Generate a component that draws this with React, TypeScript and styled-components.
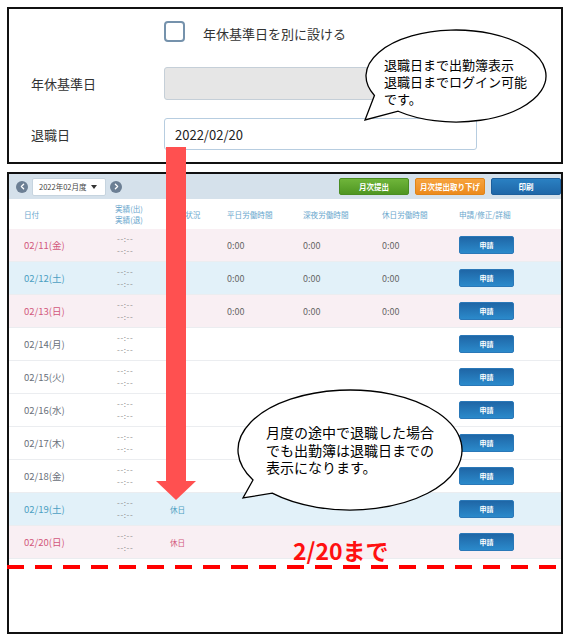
import React from "react";
import styled, { createGlobalStyle } from "styled-components";
import { ChevronLeft, ChevronRight } from "lucide-react";

const GlobalStyle = createGlobalStyle`
  html, body { margin: 0; padding: 0; background: #fff; }
  body { font-family: "Noto Sans CJK JP", "Noto Sans", sans-serif; }
  * { box-sizing: border-box; }
`;

const Page = styled.div`
  position: relative;
  width: 572px;
  height: 643px;
  padding: 7px 0 0 7px;
  overflow: hidden;
`;

/* ---------- employee settings form ---------- */

const FormPanel = styled.section`
  width: 556px;
  height: 157px;
  border: 2px solid #111;
  padding: 11px 0 0 22px;
  display: flex;
  flex-direction: column;
`;

const CheckRow = styled.label`
  display: flex;
  align-items: center;
  gap: 18px;
  height: 22px;
  margin-left: 133px;
  font-size: 13px;
  color: #333;
`;

const CheckBox = styled.span`
  width: 21px;
  height: 21px;
  border: 2px solid #7592ac;
  border-radius: 4px;
  background: #fff;
`;

const CheckText = styled.span`
  padding-top: 4px;
`;

const FieldRow = styled.div<{ $top: number; $h: number }>`
  display: grid;
  grid-template-columns: 133px 313px;
  align-items: center;
  margin-top: ${(p) => p.$top}px;
  height: ${(p) => p.$h}px;
`;

const FieldLabel = styled.span`
  font-size: 13px;
  color: #333;
`;

const TextBox = styled.div<{ $disabled?: boolean }>`
  height: 100%;
  display: flex;
  align-items: center;
  padding-left: 10px;
  border: 1px solid ${(p) => (p.$disabled ? "#c5cfd8" : "#b7cde0")};
  border-radius: 3px;
  background: ${(p) => (p.$disabled ? "#e6e6e6" : "#fff")};
  font-size: 13px;
  color: #222;
`;

/* ---------- attendance table ---------- */

const TablePanel = styled.section`
  margin-top: 8px;
  width: 556px;
  height: 462px;
  border: 2px solid #111;
  display: flex;
  flex-direction: column;
`;

const Toolbar = styled.div`
  height: 25px;
  flex: none;
  display: flex;
  align-items: center;
  padding: 0 0 0 7px;
  background: #d5e1eb;
`;

const NavButton = styled.span`
  width: 12px;
  height: 12px;
  border-radius: 50%;
  background: #6c7f94;
  display: flex;
  align-items: center;
  justify-content: center;
  color: #fff;
`;

const MonthSelect = styled.div`
  width: 74px;
  height: 18px;
  margin: 0 4px;
  display: flex;
  align-items: center;
  justify-content: space-between;
  padding: 0 8px 0 6px;
  background: #fff;
  border: 1px solid #c6d4df;
  border-radius: 2px;
  font-size: 7.5px;
  color: #444;
`;

const Caret = styled.span`
  width: 0;
  height: 0;
  border-left: 3px solid transparent;
  border-right: 3px solid transparent;
  border-top: 4px solid #333;
`;

const ToolbarActions = styled.div`
  margin-left: auto;
  display: flex;
  gap: 6px;
`;

const toolColors: Record<string, [string, string, string]> = {
  green: ["#6fb53a", "#4f9622", "#4a8d22"],
  orange: ["#f6a33e", "#ec8a1c", "#e08418"],
  blue: ["#2a80c2", "#1f67a8", "#1d5f9c"],
};

const ToolButton = styled.span<{ $tone: "green" | "orange" | "blue" }>`
  width: 70px;
  height: 17px;
  display: flex;
  align-items: center;
  justify-content: center;
  border-radius: 2px;
  border: 1px solid ${(p) => toolColors[p.$tone][2]};
  background: linear-gradient(
    ${(p) => toolColors[p.$tone][0]},
    ${(p) => toolColors[p.$tone][1]}
  );
  font-size: 7.5px;
  font-weight: 700;
  color: #fff;
`;

const gridCols = "91px 55px 57px 76px 79px 77px 1fr";

const HeadRow = styled.div`
  height: 30px;
  flex: none;
  display: grid;
  grid-template-columns: ${gridCols};
  align-items: center;
  padding-left: 15px;
  background: #fff;
  font-size: 7.6px;
  color: #6aa7cd;
`;

const HeadStack = styled.span`
  display: flex;
  flex-direction: column;
  line-height: 11px;
`;

type Kind = "holiday" | "sat" | "weekday";

const rowBg: Record<Kind, string> = {
  holiday: "#f9eff3",
  sat: "#e2f1f9",
  weekday: "#fff",
};

const dayColor: Record<Kind, string> = {
  holiday: "#d2587c",
  sat: "#4c9fc2",
  weekday: "#69707a",
};

const DayRow = styled.div<{ $kind: Kind }>`
  height: 33px;
  flex: none;
  display: grid;
  grid-template-columns: ${gridCols};
  align-items: center;
  padding-left: 15px;
  background: ${(p) => rowBg[p.$kind]};
  border-bottom: 1px solid #ebedf0;
  font-size: 9px;
  color: #666;
`;

const DateCell = styled.span<{ $kind: Kind }>`
  font-size: 9.5px;
  color: ${(p) => dayColor[p.$kind]};
`;

const TimeStack = styled.span`
  display: flex;
  flex-direction: column;
  padding-left: 2px;
  line-height: 12px;
  font-size: 8px;
  letter-spacing: 0.6px;
  color: #8a8a8a;
`;

const StatusCell = styled.span<{ $kind: Kind }>`
  font-size: 7.6px;
  color: ${(p) => dayColor[p.$kind]};
`;

const ApplyButton = styled.span`
  width: 55px;
  height: 18px;
  display: flex;
  align-items: center;
  justify-content: center;
  border-radius: 2px;
  border: 1px solid #2a78b8;
  background: linear-gradient(#1f66a6, #2b8acb);
  font-size: 7px;
  font-weight: 700;
  color: #fff;
`;

/* ---------- annotations drawn over the page ---------- */

const DownArrow = styled.svg`
  position: absolute;
  left: 156px;
  top: 147px;
`;

const Callout = styled.div<{ $x: number; $y: number; $w: number; $h: number }>`
  position: absolute;
  left: ${(p) => p.$x}px;
  top: ${(p) => p.$y}px;
  width: ${(p) => p.$w}px;
  height: ${(p) => p.$h}px;
`;

const CalloutShape = styled.svg`
  position: absolute;
  inset: 0;
  overflow: visible;
`;

const CalloutText = styled.div<{ $x: number; $y: number; $size: number; $lh: number }>`
  position: absolute;
  left: ${(p) => p.$x}px;
  top: ${(p) => p.$y}px;
  font-size: ${(p) => p.$size}px;
  line-height: ${(p) => p.$lh}px;
  color: #000;
  white-space: nowrap;
`;

const CutoffLine = styled.div`
  position: absolute;
  left: 7px;
  top: 565px;
  width: 549px;
  height: 4px;
  background: repeating-linear-gradient(
    to right,
    #ff0000 0 17px,
    transparent 17px 28px
  );
`;

const CutoffLabel = styled.div`
  position: absolute;
  left: 293px;
  top: 536px;
  font-size: 23px;
  font-weight: 700;
  line-height: 28px;
  color: #ff1010;
`;

type Day = {
  date: string;
  kind: Kind;
  hours?: boolean;
  status?: string;
};

const days: Day[] = [
  { date: "02/11(金)", kind: "holiday", hours: true },
  { date: "02/12(土)", kind: "sat", hours: true },
  { date: "02/13(日)", kind: "holiday", hours: true },
  { date: "02/14(月)", kind: "weekday" },
  { date: "02/15(火)", kind: "weekday" },
  { date: "02/16(水)", kind: "weekday" },
  { date: "02/17(木)", kind: "weekday" },
  { date: "02/18(金)", kind: "weekday" },
  { date: "02/19(土)", kind: "sat", status: "休日" },
  { date: "02/20(日)", kind: "holiday", status: "休日" },
];

function ellipseCallout(
  cx: number,
  cy: number,
  rx: number,
  ry: number,
  a1: number,
  a2: number,
  tip: [number, number]
) {
  const rad = (d: number) => (d * Math.PI) / 180;
  const p1 = [cx + rx * Math.cos(rad(a1)), cy + ry * Math.sin(rad(a1))];
  const p2 = [cx + rx * Math.cos(rad(a2)), cy + ry * Math.sin(rad(a2))];
  return `M ${p1[0]} ${p1[1]} L ${tip[0]} ${tip[1]} L ${p2[0]} ${p2[1]} A ${rx} ${ry} 0 1 0 ${p1[0]} ${p1[1]} Z`;
}

export default function App() {
  return (
    <>
      <GlobalStyle />
      <Page>
        <FormPanel>
          <CheckRow>
            <CheckBox />
            <CheckText>年休基準日を別に設ける</CheckText>
          </CheckRow>
          <FieldRow $top={25} $h={33}>
            <FieldLabel>年休基準日</FieldLabel>
            <TextBox $disabled />
          </FieldRow>
          <FieldRow $top={18} $h={32}>
            <FieldLabel>退職日</FieldLabel>
            <TextBox>2022/02/20</TextBox>
          </FieldRow>
        </FormPanel>

        <TablePanel>
          <Toolbar>
            <NavButton>
              <ChevronLeft size={9} strokeWidth={3.5} />
            </NavButton>
            <MonthSelect>
              <span>2022年02月度</span>
              <Caret />
            </MonthSelect>
            <NavButton>
              <ChevronRight size={9} strokeWidth={3.5} />
            </NavButton>
            <ToolbarActions>
              <ToolButton $tone="green">月次提出</ToolButton>
              <ToolButton $tone="orange">月次提出取り下げ</ToolButton>
              <ToolButton $tone="blue">印刷</ToolButton>
            </ToolbarActions>
          </Toolbar>

          <HeadRow>
            <span>日付</span>
            <HeadStack>
              <span>実績(出)</span>
              <span>実績(退)</span>
            </HeadStack>
            <span>勤務状況</span>
            <span>平日労働時間</span>
            <span>深夜労働時間</span>
            <span>休日労働時間</span>
            <span>申請/修正/詳細</span>
          </HeadRow>

          {days.map((d) => (
            <DayRow key={d.date} $kind={d.kind}>
              <DateCell $kind={d.kind}>{d.date}</DateCell>
              <TimeStack>
                <span>--:--</span>
                <span>--:--</span>
              </TimeStack>
              <StatusCell $kind={d.kind}>{d.status ?? ""}</StatusCell>
              <span>{d.hours ? "0:00" : ""}</span>
              <span>{d.hours ? "0:00" : ""}</span>
              <span>{d.hours ? "0:00" : ""}</span>
              <ApplyButton>申請</ApplyButton>
            </DayRow>
          ))}
        </TablePanel>

        <DownArrow width="40" height="353" viewBox="0 0 40 353">
          <rect x="10" y="0" width="20" height="336" fill="#ff5050" />
          <polygon points="0,334 40,334 20,353" fill="#ff5050" />
        </DownArrow>

        <Callout $x={360} $y={26} $w={190} $h={100}>
          <CalloutShape width="190" height="100">
            <path
              d={ellipseCallout(96, 50, 90, 46, 155, 130, [5, 94])}
              fill="#fff"
              stroke="#000"
              strokeWidth="1.3"
            />
          </CalloutShape>
          <CalloutText $x={24} $y={30} $size={13} $lh={17}>
            退職日まで出勤簿表示
            <br />
            退職日までログイン可能
            <br />
            です。
          </CalloutText>
        </Callout>

        <Callout $x={236} $y={386} $w={230} $h={128}>
          <CalloutShape width="230" height="128">
            <path
              d={ellipseCallout(114, 64, 112, 60, 150, 134, [7, 112])}
              fill="#fff"
              stroke="#000"
              strokeWidth="1.3"
            />
          </CalloutShape>
          <CalloutText $x={30} $y={38} $size={14} $lh={17.5}>
            月度の途中で退職した場合
            <br />
            でも出勤簿は退職日までの
            <br />
            表示になります。
          </CalloutText>
        </Callout>

        <CutoffLabel>2/20まで</CutoffLabel>
        <CutoffLine />
      </Page>
    </>
  );
}
